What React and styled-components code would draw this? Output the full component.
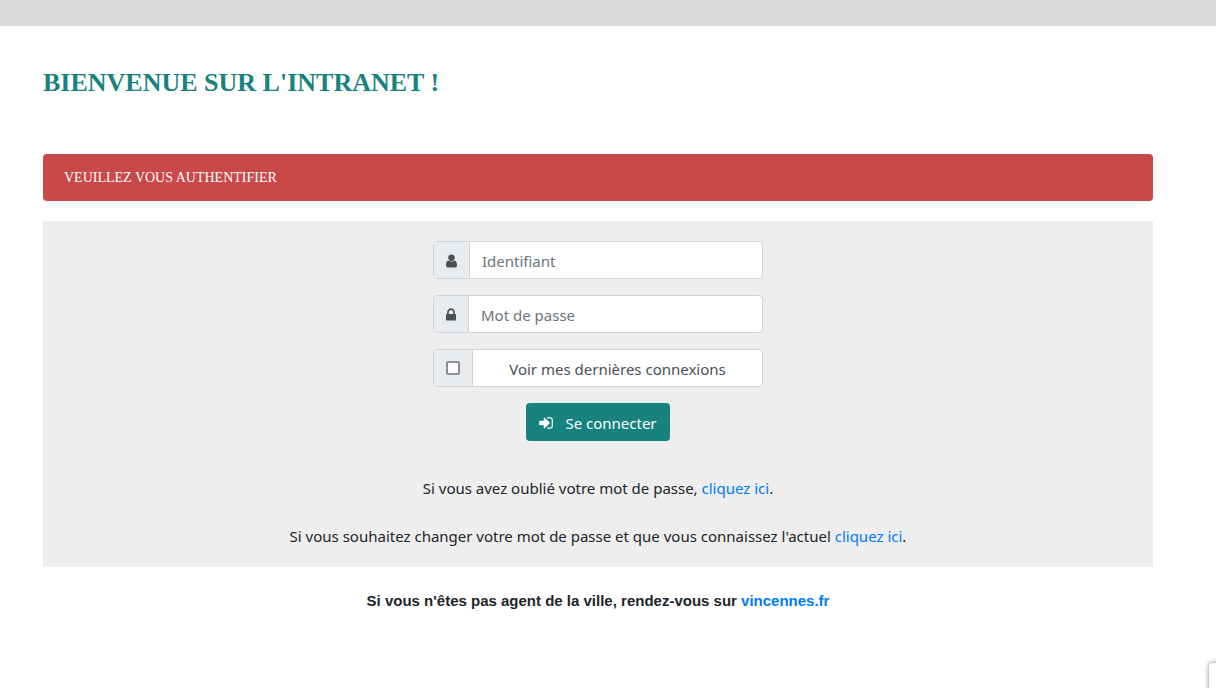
import React, { useState } from "react";
import styled, { createGlobalStyle } from "styled-components";

const GlobalStyle = createGlobalStyle`
  * {
    box-sizing: border-box;
  }
  html,
  body {
    margin: 0;
    overflow-x: hidden;
  }
  body {
    background: #fff;
    color: #212529;
    font-family: "Noto Sans", "Open Sans", sans-serif;
    font-size: 15px;
    line-height: 24px;
  }
`;

const TopBar = styled.header`
  height: 26px;
  background: #dadada;
`;

const Page = styled.main`
  padding: 41px 63px 0 43px;
`;

const Title = styled.h1`
  margin: 0 0 55px;
  color: #17827e;
  font-family: "Liberation Serif", serif;
  font-size: 26px;
  line-height: 32px;
  font-weight: bold;
  text-transform: uppercase;
`;

const Alert = styled.div`
  margin-bottom: 20px;
  padding: 12px 21px 11px;
  border-radius: 4px;
  background: #c94848;
  color: #fff;
  font-family: "Liberation Serif", serif;
  font-size: 14px;
  text-transform: uppercase;
`;

const Panel = styled.section`
  padding: 20px 16px 19px;
  background: #eee;
  text-align: center;
`;

const Form = styled.form`
  display: flex;
  flex-direction: column;
  align-items: center;
  gap: 16px;
  max-width: 330px;
  margin: 0 auto 35px;
`;

const Group = styled.div`
  display: flex;
  width: 100%;
  height: 38px;
  border: 1px solid #ced4da;
  border-radius: 4px;
  background: #fff;
  overflow: hidden;
`;

const AddOn = styled.label`
  display: flex;
  align-items: center;
  padding: 0 12px;
  border-right: 1px solid #ced4da;
  background: #e9ecef;
  color: #495057;

  svg {
    margin-top: 2px;
  }
`;

const Field = styled.input`
  flex: 1;
  min-width: 0;
  padding: 2px 12px 0;
  border: 0;
  outline: 0;
  background: transparent;
  color: #495057;
  font: inherit;

  &::placeholder {
    color: #6c757d;
    opacity: 1;
  }
`;

const CheckBox = styled.input`
  appearance: none;
  width: 14px;
  height: 14px;
  margin: 0;
  border: 2px solid #8f8f9d;
  border-radius: 2px;
  background: #fff;

  &:checked {
    background: #17827e;
  }
`;

const CheckLabel = styled.label`
  flex: 1;
  padding: 7px 12px 5px;
  color: #495057;
`;

const Submit = styled.button`
  display: flex;
  align-items: center;
  gap: 12px;
  height: 38px;
  padding: 2px 13px 0;
  border: 0;
  border-radius: 4px;
  background: #17827e;
  color: #fff;
  font: inherit;
  cursor: pointer;
`;

const Help = styled.p`
  margin: 0 0 24px;

  &:last-child {
    margin-bottom: 0;
  }
`;

const Link = styled.a`
  color: #007bff;
  text-decoration: none;
`;

const Footer = styled.p`
  margin: 22px 0 0;
  font-family: "Liberation Sans", sans-serif;
  font-size: 15px;
  font-weight: bold;
  text-align: center;
`;

const CornerBadge = styled.aside`
  position: fixed;
  right: -249px;
  bottom: -35px;
  width: 256px;
  height: 60px;
  border-radius: 4px;
  background: #fff;
  box-shadow: 0 0 5px #808080;
`;

const UserIcon = () => (
  <svg width="11" height="16" viewBox="256 0 1280 1792" fill="currentColor" aria-hidden="true">
    <path d="M1536 1399q0 109-62.5 187t-150.5 78h-854q-88 0-150.5-78t-62.5-187q0-85 8.5-160.5t31.5-152 58.5-131 94-89 134.5-34.5q131 128 313 128t313-128q76 0 134.5 34.5t94 89 58.5 131 31.5 152 8.5 160.5zm-256-887q0 159-112.5 271.5t-271.5 112.5-271.5-112.5-112.5-271.5 112.5-271.5 271.5-112.5 271.5 112.5 112.5 271.5z" />
  </svg>
);

const LockIcon = () => (
  <svg width="10" height="16" viewBox="320 0 1152 1792" fill="currentColor" aria-hidden="true">
    <path d="M640 768h512v-192q0-106-75-181t-181-75-181 75-75 181v192zm832 96v576q0 40-28 68t-68 28h-960q-40 0-68-28t-28-68v-576q0-40 28-68t68-28h32v-192q0-184 132-316t316-132 316 132 132 316v192h32q40 0 68 28t28 68z" />
  </svg>
);

const SignInIcon = () => (
  <svg width="14" height="16" viewBox="128 0 1536 1792" fill="currentColor" aria-hidden="true">
    <path d="M1312 896q0 26-19 45l-544 544q-19 19-45 19t-45-19-19-45v-288h-448q-26 0-45-19t-19-45v-384q0-26 19-45t45-19h448v-288q0-26 19-45t45-19 45 19l544 544q19 19 19 45zm352-352v704q0 119-84.5 203.5t-203.5 84.5h-320q-13 0-22.5-9.5t-9.5-22.5q0-4-1-20t-.5-26.5 3-23.5 10-19.5 20.5-6.5h320q66 0 113-47t47-113v-704q0-66-47-113t-113-47h-312l-11.5-1-11.5-3-8-5.5-7-9-2-13.5q0-4-1-20t-.5-26.5 3-23.5 10-19.5 20.5-6.5h320q119 0 203.5 84.5t84.5 203.5z" />
  </svg>
);

const LoginForm = () => {
  const [login, setLogin] = useState("");
  const [password, setPassword] = useState("");
  const [showLast, setShowLast] = useState(false);

  return (
    <Form onSubmit={(e) => e.preventDefault()}>
      <Group>
        <AddOn htmlFor="login">
          <UserIcon />
        </AddOn>
        <Field
          id="login"
          type="text"
          placeholder="Identifiant"
          aria-label="Identifiant"
          value={login}
          onChange={(e) => setLogin(e.target.value)}
        />
      </Group>
      <Group>
        <AddOn htmlFor="password">
          <LockIcon />
        </AddOn>
        <Field
          id="password"
          type="password"
          placeholder="Mot de passe"
          aria-label="Mot de passe"
          value={password}
          onChange={(e) => setPassword(e.target.value)}
        />
      </Group>
      <Group>
        <AddOn as="div">
          <CheckBox
            id="last"
            type="checkbox"
            checked={showLast}
            onChange={(e) => setShowLast(e.target.checked)}
          />
        </AddOn>
        <CheckLabel htmlFor="last">Voir mes dernières connexions</CheckLabel>
      </Group>
      <Submit type="submit">
        <SignInIcon />
        Se connecter
      </Submit>
    </Form>
  );
};

const App = () => {
  return (
    <>
      <GlobalStyle />
      <TopBar />
      <Page>
        <Title>Bienvenue sur l'intranet !</Title>
        <Alert role="alert">Veuillez vous authentifier</Alert>
        <Panel>
          <LoginForm />
          <Help>
            Si vous avez oublié votre mot de passe, <Link href="#oubli">cliquez ici</Link>.
          </Help>
          <Help>
            Si vous souhaitez changer votre mot de passe et que vous connaissez l'actuel{" "}
            <Link href="#changer">cliquez ici</Link>.
          </Help>
        </Panel>
        <Footer>
          Si vous n'êtes pas agent de la ville, rendez-vous sur{" "}
          <Link href="#vincennes">vincennes.fr</Link>
        </Footer>
      </Page>
      <CornerBadge />
    </>
  );
};

export default App;
